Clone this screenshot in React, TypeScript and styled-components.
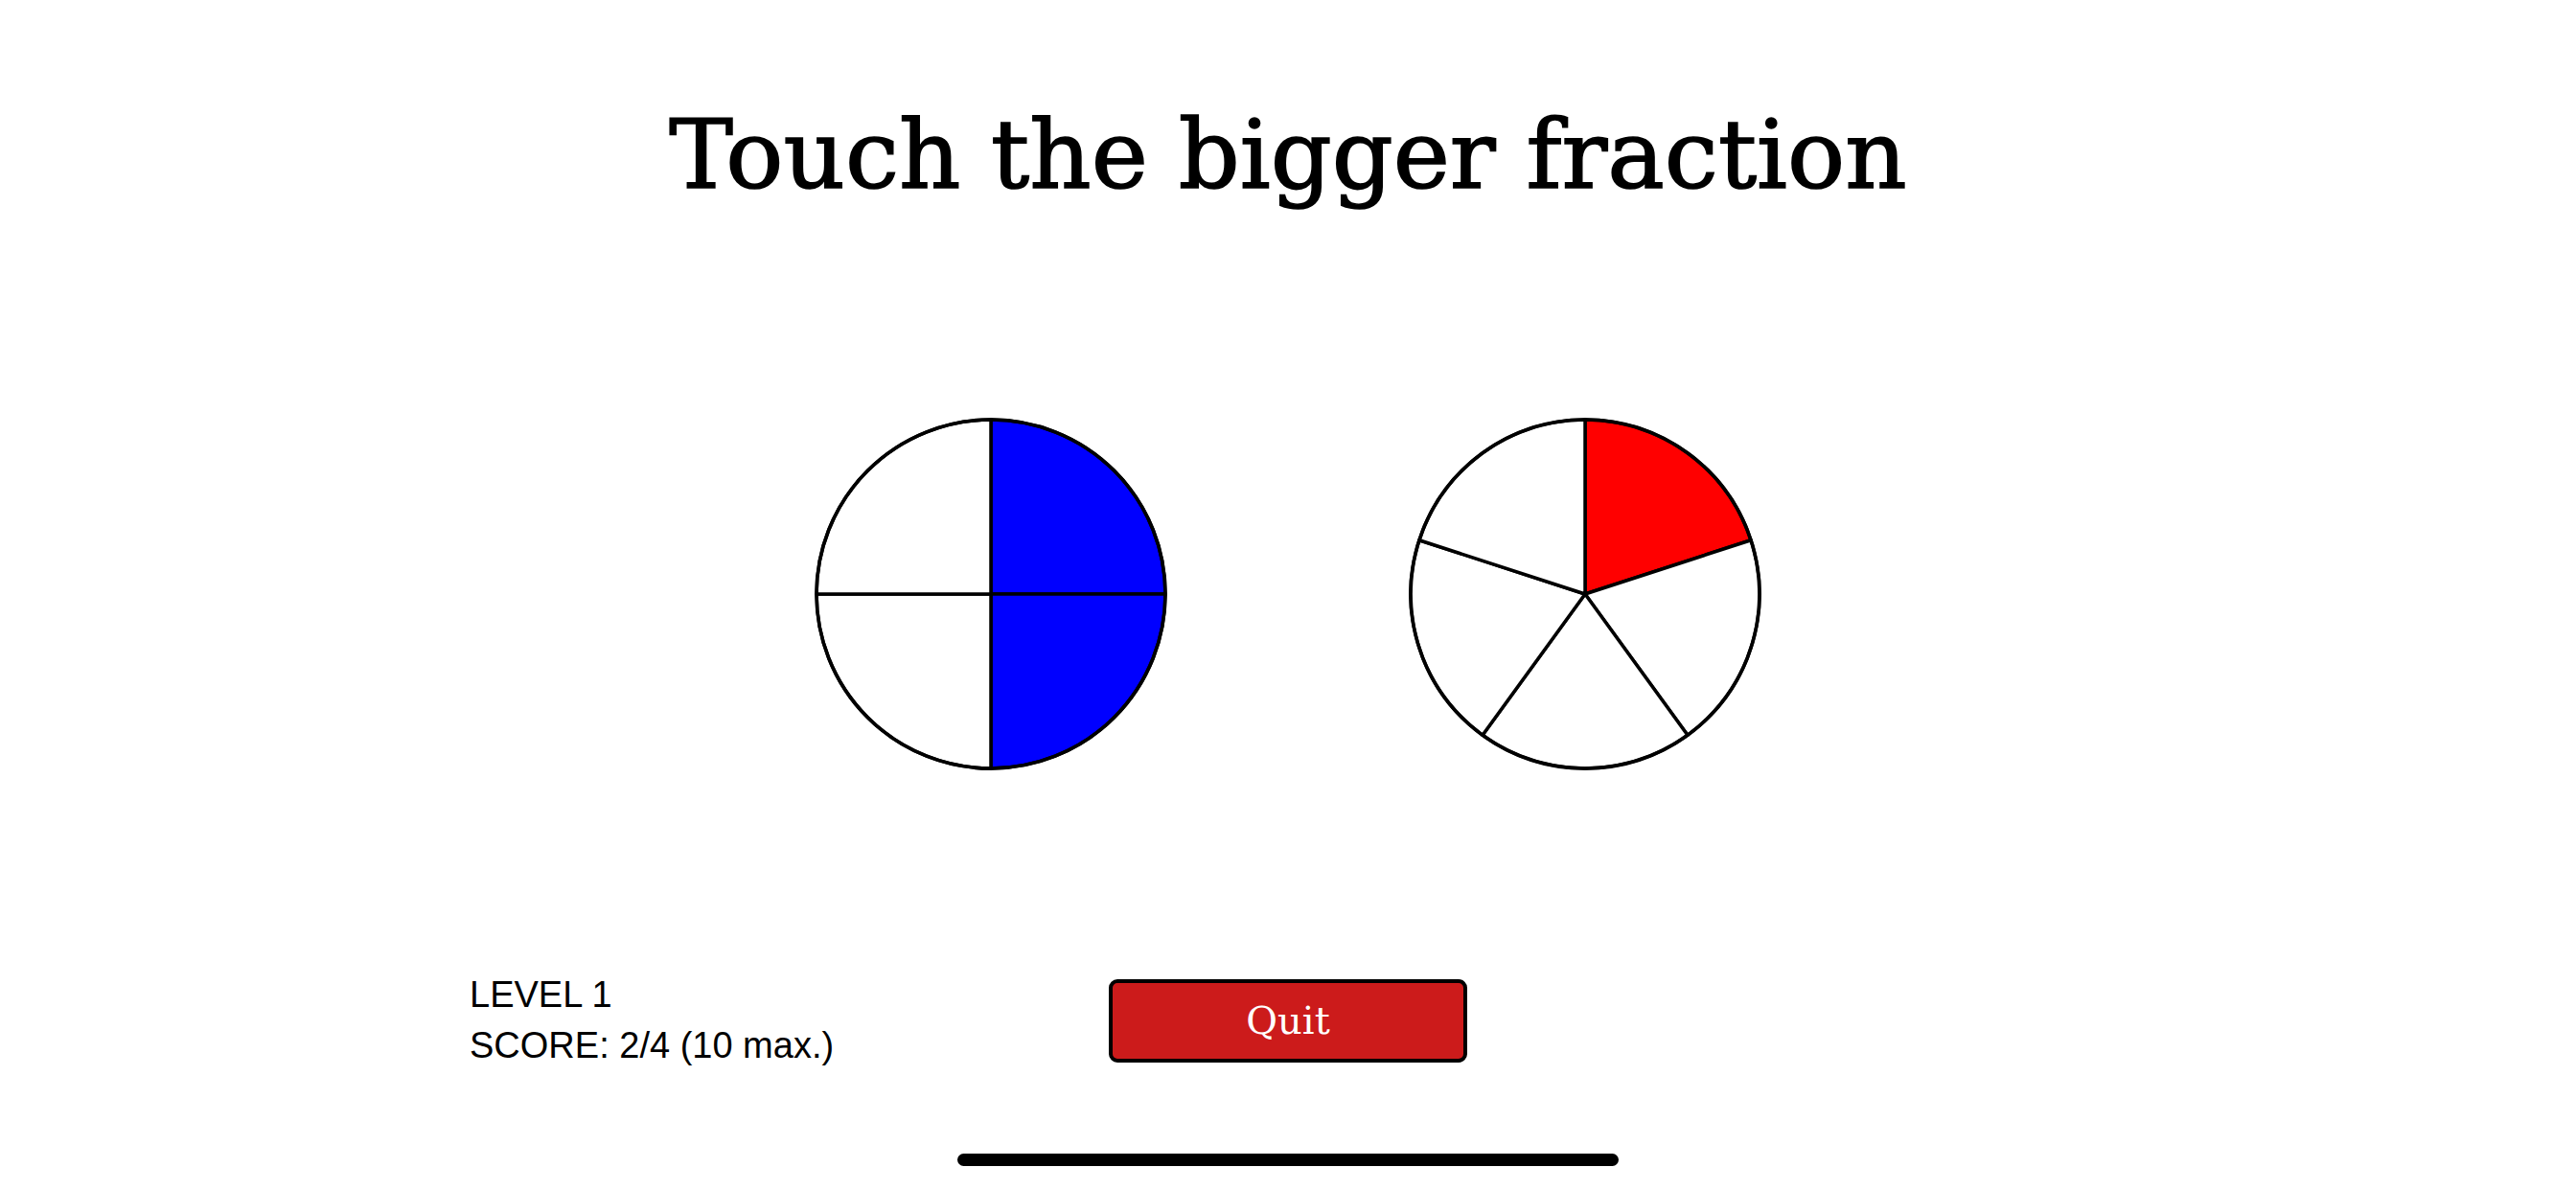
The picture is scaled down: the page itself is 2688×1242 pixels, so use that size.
import React from 'react';
import styled, { createGlobalStyle } from 'styled-components';

const GlobalStyle = createGlobalStyle`
  html, body {
    margin: 0;
    padding: 0;
    background: #ffffff;
  }
`;

const Screen = styled.div`
  width: 2688px;
  height: 1242px;
  display: flex;
  flex-direction: column;
  align-items: center;
  background: #ffffff;
  overflow: hidden;
`;

const Title = styled.h1`
  margin: 102px 0 0;
  font-family: 'DejaVu Serif', serif;
  font-weight: normal;
  font-size: 100px;
  line-height: 120px;
  color: #000000;
  -webkit-text-stroke: 1.6px #000000;
  text-align: center;
`;

const PieRow = styled.div`
  display: flex;
  gap: 250px;
  margin-top: 213px;
`;

const PieButton = styled.div`
  width: 370px;
  height: 370px;
  cursor: pointer;
`;

const Footer = styled.div`
  width: 100%;
  box-sizing: border-box;
  padding: 0 490px;
  margin-top: 207px;
  display: grid;
  grid-template-columns: 1fr 374px 1fr;
  align-items: center;
`;

const Stats = styled.div`
  font-family: 'Liberation Sans', Arial, sans-serif;
  font-size: 38px;
  line-height: 53px;
  color: #000000;
`;

const QuitButton = styled.button`
  height: 87px;
  width: 374px;
  box-sizing: border-box;
  border: 4px solid #000000;
  border-radius: 9px;
  background: #cc1b1b;
  color: #ffffff;
  font-family: 'DejaVu Serif', serif;
  font-size: 40px;
  padding: 0;
  cursor: pointer;
`;

const HomeIndicator = styled.div`
  margin-top: auto;
  margin-bottom: 25px;
  width: 690px;
  height: 13px;
  border-radius: 7px;
  background: #000000;
`;

type PieProps = {
  parts: number;
  filled: number;
  color: string;
};

const R = 182;

// one wedge of the pie, starting at twelve o'clock and going clockwise
const slicePath = (i: number, n: number) => {
  const a0 = (i / n) * Math.PI * 2 - Math.PI / 2;
  const a1 = ((i + 1) / n) * Math.PI * 2 - Math.PI / 2;
  const x0 = R * Math.cos(a0);
  const y0 = R * Math.sin(a0);
  const x1 = R * Math.cos(a1);
  const y1 = R * Math.sin(a1);
  const large = a1 - a0 > Math.PI ? 1 : 0;
  return `M0 0 L${x0} ${y0} A${R} ${R} 0 ${large} 1 ${x1} ${y1} Z`;
};

const Pie = ({ parts, filled, color }: PieProps) => (
  <PieButton>
    <svg width="370" height="370" viewBox="-185 -185 370 370">
      {Array.from({ length: parts }, (_, i) => (
        <path
          key={i}
          d={slicePath(i, parts)}
          fill={i < filled ? color : '#ffffff'}
          stroke="#000000"
          strokeWidth={3.5}
          strokeLinejoin="round"
        />
      ))}
      <circle r={R} fill="none" stroke="#000000" strokeWidth={3.5} />
    </svg>
  </PieButton>
);

const App = () => {
  return (
    <Screen>
      <GlobalStyle />
      <Title>Touch the bigger fraction</Title>
      <PieRow>
        <Pie parts={4} filled={2} color="#0000ff" />
        <Pie parts={5} filled={1} color="#ff0000" />
      </PieRow>
      <Footer>
        <Stats>
          <div>LEVEL 1</div>
          <div>SCORE: 2/4 (10 max.)</div>
        </Stats>
        <QuitButton>Quit</QuitButton>
      </Footer>
      <HomeIndicator />
    </Screen>
  );
};

export default App;
